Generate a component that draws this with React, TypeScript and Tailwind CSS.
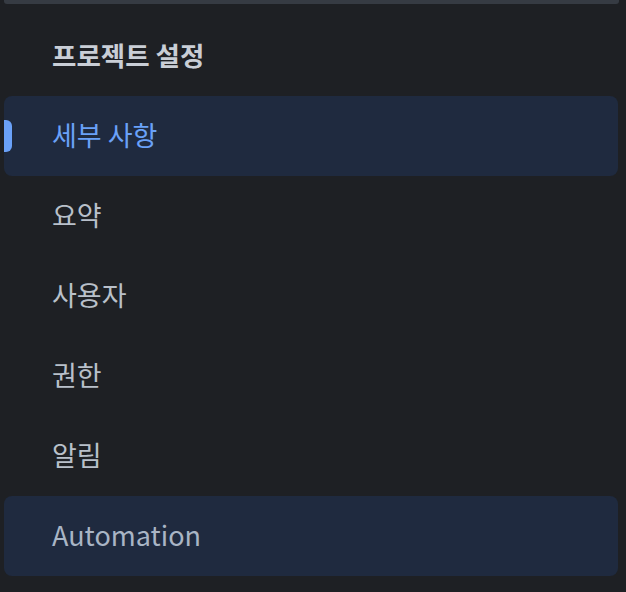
export default function App() {
  const items = ["요약", "사용자", "권한", "알림"];
  const font = { fontFamily: '"Noto Sans CJK KR", "Noto Sans", sans-serif' };
  return (
    <div className="w-[626px] h-[592px] bg-[#1e2024] overflow-hidden" style={font}>
      <div className="ml-[4px] mr-[7px] h-[4px] bg-[#363b43] rounded-b-[3px]" />
      <div className="h-[92px] flex items-center pl-[52px] pt-[10px]">
        <span className="text-[26.5px] font-bold text-[#c9ced6]">프로젝트 설정</span>
      </div>
      <div className="pl-[4px] pr-[8px] flex flex-col">
        <div className="relative h-[80px] rounded-[8px] bg-[#1f2a3f] flex items-center pl-[48px]">
          <div className="absolute left-0 top-[24px] w-[8px] h-[32px] rounded-r-[6px] bg-[#6aa1f8]" />
          <span className="text-[27px] text-[#6aa1f8] -mt-px">세부 사항</span>
        </div>
        {items.map((t) => (
          <div key={t} className="h-[80px] flex items-center pl-[48px]">
            <span className="text-[27px] text-[#b9c0ca] -mt-px">{t}</span>
          </div>
        ))}
        <div className="h-[80px] rounded-[8px] bg-[#1f2a3f] flex items-center pl-[48px]">
          <span className="text-[27px] text-[#a9b5c5] -mt-px">Automation</span>
        </div>
      </div>
    </div>
  );
}
